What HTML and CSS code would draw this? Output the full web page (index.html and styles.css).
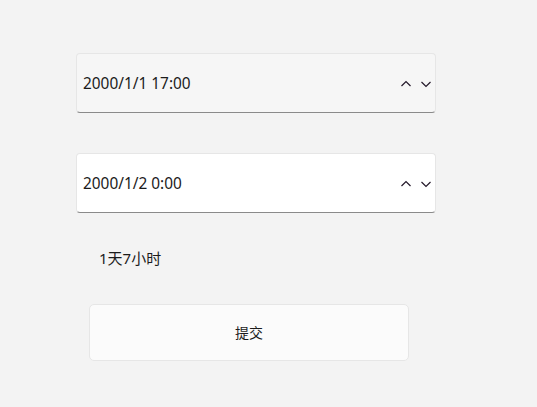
FILE: index.html
```html
<!DOCTYPE html>
<html>
<head>
  <meta charset="UTF-8">
  <title>Time Span</title>
  <link rel="stylesheet" href="styles.css">
</head>
<body>
  <div class="panel">
    <div class="picker hover">
      <span class="value">2000/1/1 17:00</span>
      <span class="spin">
        <svg width="12" height="8" viewBox="0 0 12 8"><path d="M1.5 6 L6 1.5 L10.5 6" fill="none" stroke="#24182a" stroke-width="1.2"/></svg>
        <svg width="12" height="8" viewBox="0 0 12 8"><path d="M1.5 2 L6 6.5 L10.5 2" fill="none" stroke="#24182a" stroke-width="1.2"/></svg>
      </span>
    </div>

    <div class="picker">
      <span class="value">2000/1/2 0:00</span>
      <span class="spin">
        <svg width="12" height="8" viewBox="0 0 12 8"><path d="M1.5 6 L6 1.5 L10.5 6" fill="none" stroke="#24182a" stroke-width="1.2"/></svg>
        <svg width="12" height="8" viewBox="0 0 12 8"><path d="M1.5 2 L6 6.5 L10.5 2" fill="none" stroke="#24182a" stroke-width="1.2"/></svg>
      </span>
    </div>

    <div class="result">1天7小时</div>

    <button class="submit">提交</button>
  </div>
</body>
</html>
```

FILE: styles.css
```css
body {
  margin: 0;
  background-color: #f3f3f3;
  font-family: 'Noto Sans', 'Noto Sans CJK SC', sans-serif;
  color: #1b1b1b;
}
.panel {
  display: flex;
  flex-direction: column;
  align-items: flex-start;
  padding: 53px 0 0 76px;
}
.picker {
  box-sizing: border-box;
  width: 360px;
  height: 60px;
  display: flex;
  align-items: center;
  justify-content: space-between;
  padding: 0 3px 0 6px;
  background-color: #ffffff;
  border: 1px solid #e6e6e6;
  border-bottom: 1px solid #8a8a8a;
  border-radius: 4px;
  margin-bottom: 40px;
}
.picker.hover {
  background-color: #f6f6f6;
}
.value {
  font-size: 15.4px;
  margin-top: 1px;
}
.spin {
  display: flex;
  gap: 8px;
  margin-top: 2px;
}
.result {
  font-size: 15px;
  margin: 0 0 0 23px;
  line-height: 20px;
  margin-top: -5px;
}
.submit {
  box-sizing: border-box;
  width: 320px;
  height: 57px;
  margin: 36px 0 0 13px;
  background-color: #fbfbfb;
  border: 1px solid #e6e6e6;
  border-radius: 5px;
  font-family: 'Noto Sans', 'Noto Sans CJK SC', sans-serif;
  font-size: 14px;
  color: #1b1b1b;
  padding-bottom: 2px;
}
```
